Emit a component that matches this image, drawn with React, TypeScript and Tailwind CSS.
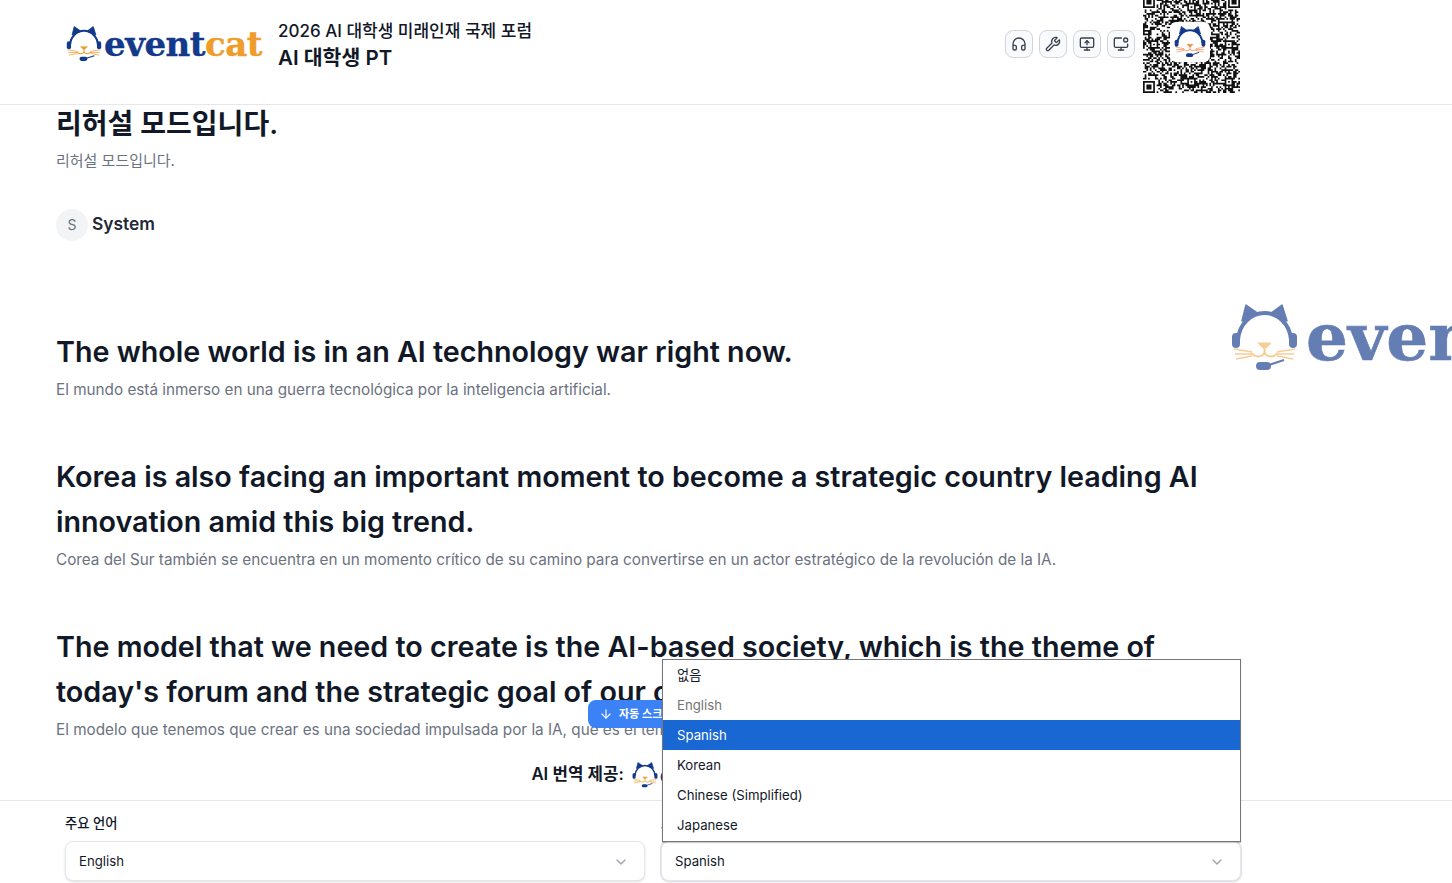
import React from "react";
import { ArrowDown, ChevronDown, Headphones, MonitorDot, MonitorUp, Wrench } from "lucide-react";

const NAVY = "#12398a";
const ORANGE = "#ee9c2a";

const CatMark = ({ className, navy = NAVY, orange = ORANGE }: { className: string; navy?: string; orange?: string }) => (
  <svg viewBox="0 0 67 68" className={className} fill="none">
    <path d="M11 17 15 1 28 10Z" fill={navy} stroke={navy} strokeWidth="1.5" strokeLinejoin="round" />
    <path d="M56 17 51 1 39 10Z" fill={navy} stroke={navy} strokeWidth="1.5" strokeLinejoin="round" />
    <path d="M7 36C8 20 20 9 33.5 9S59 20 60 36" stroke={navy} strokeWidth="4" />
    <rect x="1" y="29" width="8" height="15" rx="4" fill={navy} />
    <rect x="58" y="29" width="8" height="15" rx="4" fill={navy} />
    <path d="M3 45 21 48M4 50 21 50M5 55 21 52M64 45 46 48M63 50 46 50M62 55 46 52" stroke={orange} strokeWidth="1.4" />
    <path d="M27 39H40L35 44H32Z" fill={orange} stroke={orange} strokeLinejoin="round" />
    <path d="M33.5 43V49M20 49C25 54 31 53 33.5 49C36 53 42 54 47 49" stroke={orange} strokeWidth="2" />
    <path d="M38 61 53 56" stroke={navy} strokeWidth="2" />
    <rect x="25" y="58" width="15" height="8" rx="4" fill={navy} />
  </svg>
);

const Wordmark = ({ className }: { className: string }) => (
  <span className={`font-['DejaVu_Serif',serif] font-bold leading-none whitespace-nowrap ${className}`}>
    <span className="text-[#12398a]">event</span>
    <span className="text-[#ee9c2a]">cat</span>
  </span>
);

// fake qr modules, fixed seed so the picture stays the same
const qrPath = () => {
  const size = 57;
  let seed = 73;
  const cells: boolean[][] = [];
  for (let y = 0; y < size; y++) {
    cells.push([]);
    for (let x = 0; x < size; x++) {
      seed = (seed * 1103515245 + 12345) & 0x7fffffff;
      cells[y].push(((seed >> 16) & 7) < 4);
    }
  }
  const finder = (fx: number, fy: number) => {
    for (let y = -1; y < 8; y++) {
      for (let x = -1; x < 8; x++) {
        const px = fx + x;
        const py = fy + y;
        if (px < 0 || py < 0 || px >= size || py >= size) continue;
        const ring = x >= 0 && x < 7 && y >= 0 && y < 7 && (x === 0 || x === 6 || y === 0 || y === 6);
        const core = x >= 2 && x <= 4 && y >= 2 && y <= 4;
        cells[py][px] = ring || core;
      }
    }
  };
  finder(0, 0);
  finder(50, 0);
  finder(0, 50);
  const align = (ax: number, ay: number) => {
    for (let y = -2; y <= 2; y++) {
      for (let x = -2; x <= 2; x++) {
        cells[ay + y][ax + x] = Math.max(Math.abs(x), Math.abs(y)) !== 1;
      }
    }
  };
  [[6, 28], [28, 6], [50, 28], [28, 50], [50, 50]].forEach(([ax, ay]) => align(ax, ay));
  let d = "";
  cells.forEach((row, y) =>
    row.forEach((on, x) => {
      if (on) d += `M${x} ${y}h1v1h-1z`;
    })
  );
  return d;
};

const QrCode = () => (
  <div className="relative w-[97px] h-[97px] shrink-0">
    <svg viewBox="0 0 57 57" className="w-full h-full">
      <path d={qrPath()} fill="#111111" />
    </svg>
    <div className="absolute left-[27px] top-[26px] w-[40px] h-[40px] bg-white rounded-md flex items-center justify-center">
      <CatMark className="w-[32px] h-[32px]" orange="#f08a4b" />
    </div>
  </div>
);

const ToolButton = ({ children }: { children: React.ReactNode }) => (
  <button className="w-[28px] h-[28px] flex items-center justify-center rounded-lg border border-[#d1d5db] bg-[#f9fafb] text-[#374151]">
    {children}
  </button>
);

const Segment = ({
  text,
  sub,
  className,
  textSize = "text-[28.68px]",
  subStyle = "mt-[4px] text-[15.28px]",
}: {
  text: string;
  sub: string;
  className?: string;
  textSize?: string;
  subStyle?: string;
}) => (
  <div className={className}>
    <h2 className={`${textSize} leading-[45px] font-semibold text-[#111827]`}>{text}</h2>
    <p className={`${subStyle} leading-6 text-[#6b7280]`}>{sub}</p>
  </div>
);

const LangSelect = ({ label, value, focused }: { label: string; value: string; focused?: boolean }) => (
  <div>
    <label className="block text-[13.3px] leading-5 font-medium text-[#111827] mb-2">{label}</label>
    <div
      className={`h-10 pt-[2px] pl-[13px] pr-[15px] flex items-center justify-between bg-white rounded-lg border border-[#e5e7eb] shadow-sm text-[13.2px] text-[#111827] ${
        focused ? "ring-1 ring-[#dfe1e6]" : ""
      }`}
    >
      <span>{value}</span>
      <ChevronDown size={16} className="text-[#9ca3af]" />
    </div>
  </div>
);

const options = ["없음", "English", "Spanish", "Korean", "Chinese (Simplified)", "Japanese"];

export default function App() {
  return (
    <div className="relative h-screen overflow-hidden flex flex-col bg-white font-[Inter,'Noto_Sans_CJK_KR',sans-serif]">
      <header className="relative z-10 h-[105px] shrink-0 border-b border-[#e5e7eb] bg-white pb-4">
        <div className="h-[88px] ml-[66px] w-[1174px] flex items-center">
          <CatMark className="w-[36px] h-[36px] shrink-0" />
          <Wordmark className="ml-[2px] text-[34px] tracking-[-0.5px] w-[158px] [-webkit-text-stroke:0.4px]" />
          <div className="ml-[16px] text-[#111827]">
            <div className="text-[17px] leading-6 font-medium translate-y-[2px]">2026 AI 대학생 미래인재 국제 포럼</div>
            <div className="mt-[2px] text-[20.5px] leading-7 font-semibold translate-y-[1px]">AI 대학생 PT</div>
          </div>
          <div className="ml-auto flex items-center gap-[6px]">
            <ToolButton><Headphones size={16} /></ToolButton>
            <ToolButton><Wrench size={16} /></ToolButton>
            <ToolButton><MonitorUp size={16} /></ToolButton>
            <ToolButton><MonitorDot size={16} /></ToolButton>
            <div className="ml-[2px]"><QrCode /></div>
          </div>
        </div>
      </header>

      <main className="flex-1 min-h-0 overflow-hidden">
        <div className="ml-14 w-[1184px] -mt-[3px]">
          <Segment text="리허설 모드입니다." sub="리허설 모드입니다." textSize="text-[28px]" subStyle="mt-[2px] text-[15px]" />
          <div className="mt-[36px] flex items-center gap-1">
            <div className="w-8 h-8 rounded-full bg-[#f3f4f6] flex items-center justify-center text-sm text-[#6b7280]">S</div>
            <span className="text-[17.4px] leading-7 font-semibold text-[#1f2937] -translate-y-[1px]">System</span>
          </div>
          <Segment
            className="mt-[88px]"
            text="The whole world is in an AI technology war right now."
            sub="El mundo está inmerso en una guerra tecnológica por la inteligencia artificial."
          />
          <Segment
            className="mt-[52px]"
            text="Korea is also facing an important moment to become a strategic country leading AI innovation amid this big trend."
            sub="Corea del Sur también se encuentra en un momento crítico de su camino para convertirse en un actor estratégico de la revolución de la IA."
          />
          <Segment
            className="mt-[52px]"
            text="The model that we need to create is the AI-based society, which is the theme of today's forum and the strategic goal of our country."
            sub="El modelo que tenemos que crear es una sociedad impulsada por la IA, que es el tema del foro de hoy y el objetivo estratégico de nuestro país."
          />
          <div className="mt-[21px] h-6 flex items-center justify-center">
            <span className="text-[16.8px] font-semibold text-[#111827]">AI 번역 제공:</span>
            <CatMark className="ml-2 w-[26px] h-[26px]" />
            <Wordmark className="ml-[2px] text-[22px]" />
          </div>
        </div>
      </main>

      <footer className="h-[83px] shrink-0 border-t border-[#e5e7eb] bg-white pt-3">
        <div className="ml-[65px] w-[1176px] grid grid-cols-2 gap-4">
          <LangSelect label="주요 언어" value="English" />
          <LangSelect label="보조 언어" value="Spanish" focused />
        </div>
      </footer>

      {/* watermark logo, runs off the right edge */}
      <div className="absolute left-[1231px] top-[304px] flex items-center opacity-65 pointer-events-none">
        <CatMark className="w-[67px] h-[68px] shrink-0" orange="#f5b560" />
        <span className="ml-[8px] -mt-[3px] font-['DejaVu_Serif',serif] font-bold text-[66px] [-webkit-text-stroke:0.6px] leading-none text-[#12398a]">eventcat</span>
      </div>

      <button className="absolute left-[588px] top-[700px] h-[28px] w-[150px] pl-[11px] flex items-center gap-[6px] rounded-lg bg-[#3b82f6] text-white text-[11px] font-semibold">
        <ArrowDown size={14} />
        자동 스크롤
      </button>

      <ul className="absolute left-[662px] top-[659px] w-[579px] h-[183px] bg-white border border-[#767676] text-[13.2px] text-[#111827] shadow-[0_1px_1px_rgba(0,0,0,0.2)]">
        {options.map((name) => (
          <li
            key={name}
            className={`h-[30px] pt-[2px] pl-[14px] flex items-center ${
              name === "Spanish" ? "bg-[#1967d2] text-white" : name === "English" ? "text-[#757575]" : ""
            }`}
          >
            {name}
          </li>
        ))}
      </ul>
    </div>
  );
}
